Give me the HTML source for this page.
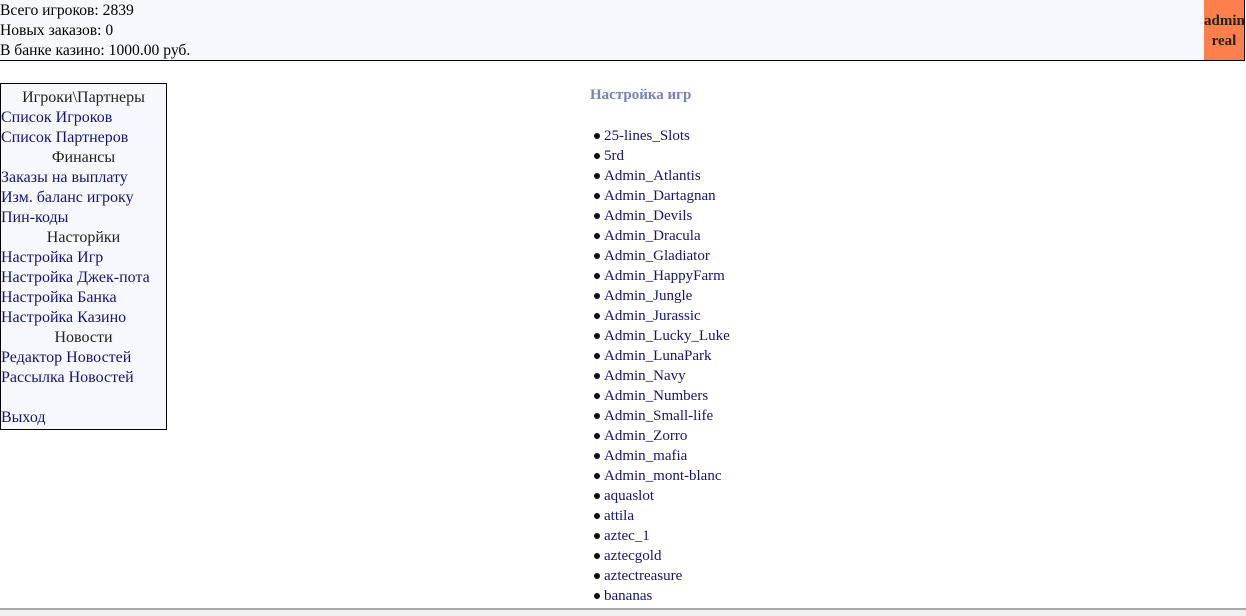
<!DOCTYPE html>
<html><head><meta charset="utf-8"><style>
html,body{margin:0;padding:0;width:1246px;height:614px;overflow:hidden;background:#fff;font-family:"Liberation Serif","DejaVu Serif",serif;font-size:15px;color:#000;}
#hdr{position:absolute;left:0;top:0;width:1244px;height:60px;background:#f7f8fe;border-bottom:1px solid #000;border-right:1px solid #000;font-size:15.6px}
#hdr div.l{position:absolute;left:0;line-height:20px;}
#adm{position:absolute;left:1204px;top:0;width:40px;height:60px;background:#fe7f4c;font-weight:bold;text-align:center;font-size:15px;line-height:20px;padding-top:11px;box-sizing:border-box;color:#222;overflow:hidden;white-space:nowrap}
#side{position:absolute;left:0;top:83px;width:167px;height:347px;border:1px solid #000;background:#f7f8fe;padding-top:4px;box-sizing:border-box;font-size:16px}
#side div{height:20px;line-height:20px;white-space:nowrap;padding-left:0}
#side .h{text-align:center;color:#222}
a{color:#13137e;text-decoration:none}
#title{position:absolute;left:590px;top:85px;font-weight:bold;color:#7282c3;line-height:20px}
#lst{position:absolute;left:576px;top:126px;height:482px;overflow:hidden;width:300px}
ul{margin:0;padding:0 0 0 28px;line-height:20px;list-style:none}
li{margin:0;position:relative}
li::before{content:"";position:absolute;left:-10px;top:7px;width:6px;height:6px;border-radius:50%;background:#111}
#bar{position:absolute;left:0;top:608px;width:1246px;height:6px;background:#f0f0f0;border-top:2px solid #a8a8a8;z-index:5}
</style></head><body>
<div id="hdr">
<div class="l" style="top:1px">Всего игроков: 2839</div>
<div class="l" style="top:21px">Новых заказов: 0</div>
<div class="l" style="top:41px">В банке казино: 1000.00 руб.</div>
<div id="adm">admin<br>real</div>
</div>
<div id="side">
<div class="h">Игроки\Партнеры</div>
<div><a>Список Игроков</a></div>
<div><a>Список Партнеров</a></div>
<div class="h">Финансы</div>
<div><a>Заказы на выплату</a></div>
<div><a>Изм. баланс игроку</a></div>
<div><a>Пин-коды</a></div>
<div class="h">Насторйки</div>
<div><a>Настройка Игр</a></div>
<div><a>Настройка Джек-пота</a></div>
<div><a>Настройка Банка</a></div>
<div><a>Настройка Казино</a></div>
<div class="h">Новости</div>
<div><a>Редактор Новостей</a></div>
<div><a>Рассылка Новостей</a></div>
<div></div>
<div><a>Выход</a></div>
</div>
<div id="title">Настройка игр</div>
<div id="lst"><ul>
<li><a>25-lines_Slots</a></li>
<li><a>5rd</a></li>
<li><a>Admin_Atlantis</a></li>
<li><a>Admin_Dartagnan</a></li>
<li><a>Admin_Devils</a></li>
<li><a>Admin_Dracula</a></li>
<li><a>Admin_Gladiator</a></li>
<li><a>Admin_HappyFarm</a></li>
<li><a>Admin_Jungle</a></li>
<li><a>Admin_Jurassic</a></li>
<li><a>Admin_Lucky_Luke</a></li>
<li><a>Admin_LunaPark</a></li>
<li><a>Admin_Navy</a></li>
<li><a>Admin_Numbers</a></li>
<li><a>Admin_Small-life</a></li>
<li><a>Admin_Zorro</a></li>
<li><a>Admin_mafia</a></li>
<li><a>Admin_mont-blanc</a></li>
<li><a>aquaslot</a></li>
<li><a>attila</a></li>
<li><a>aztec_1</a></li>
<li><a>aztecgold</a></li>
<li><a>aztectreasure</a></li>
<li><a>bananas</a></li>
<li><a>big_bonus</a></li>
</ul></div>
<div id="bar"></div>
</body></html>
